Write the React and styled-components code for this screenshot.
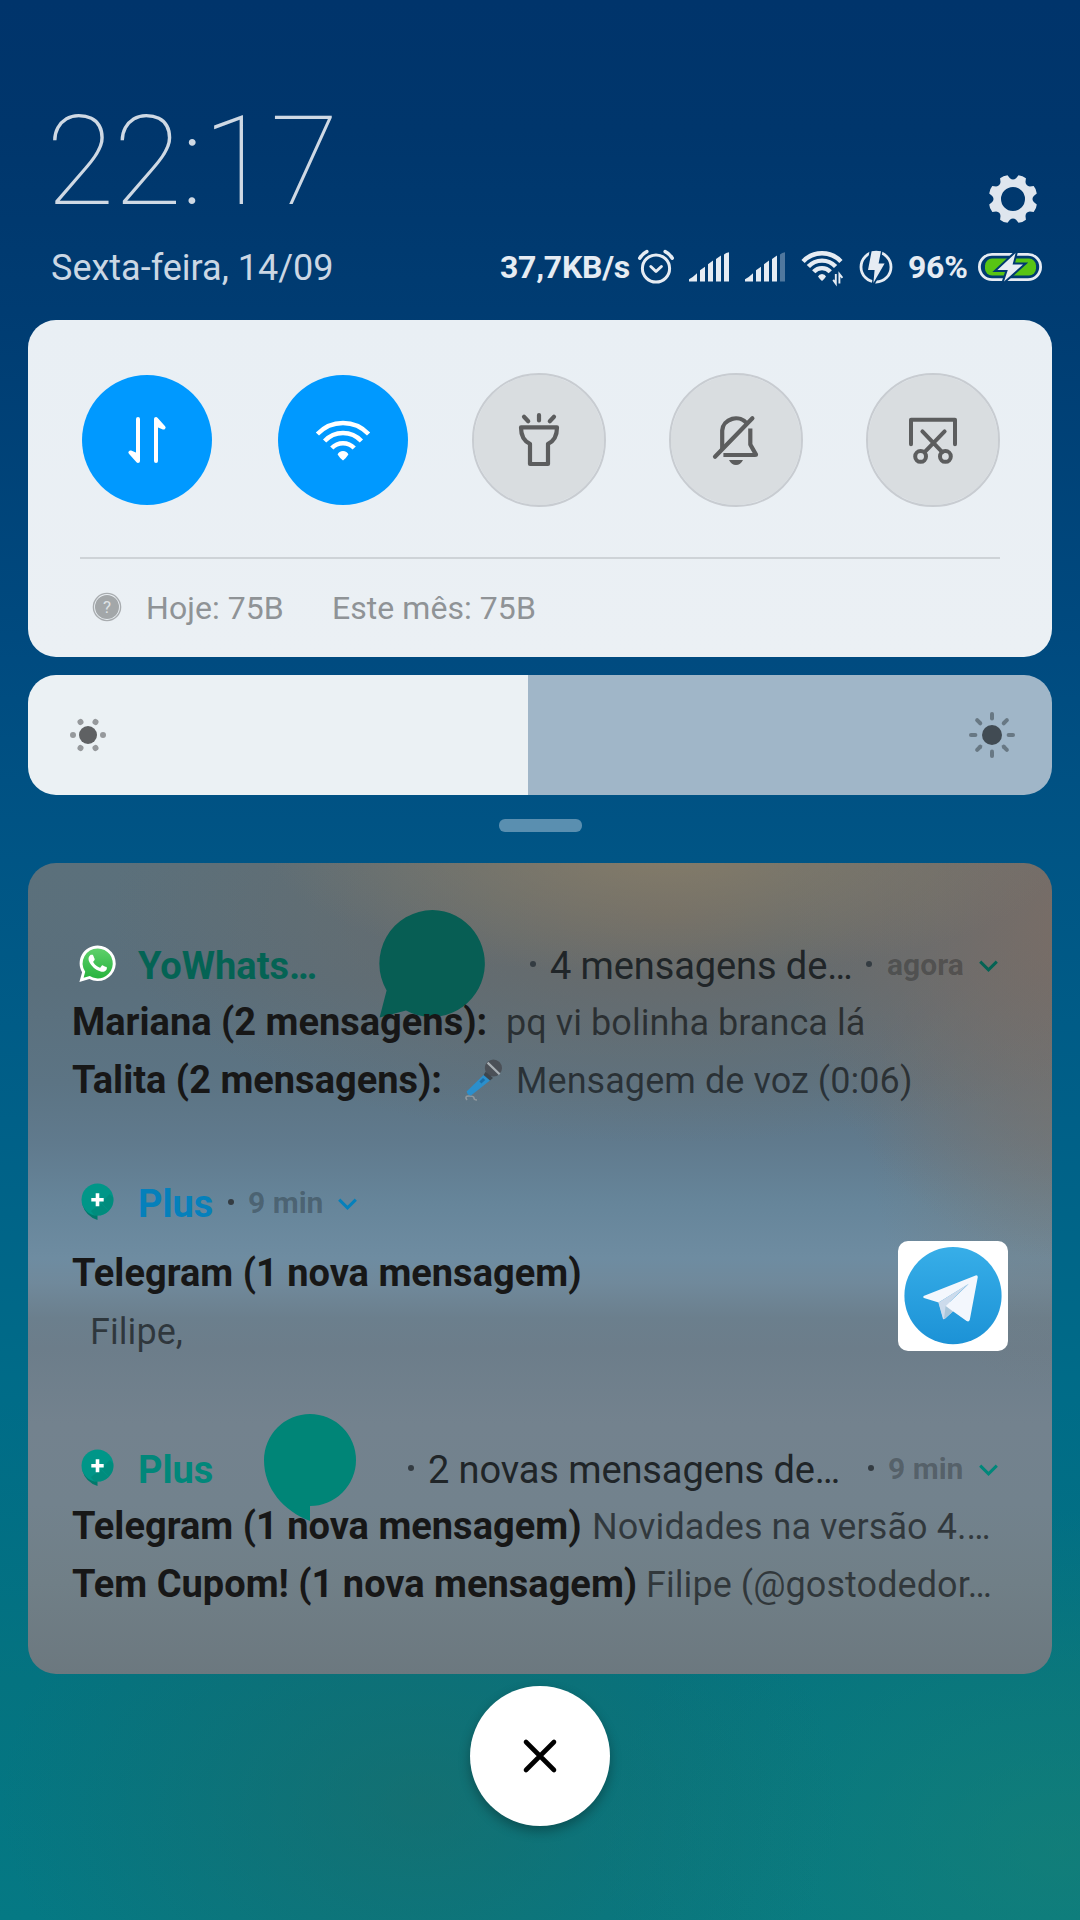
import React from "react";
import styled, { createGlobalStyle } from "styled-components";

const GlobalStyle = createGlobalStyle`
  * {
    box-sizing: border-box;
  }

  body {
    margin: 0;
    font-family: Roboto, "Noto Sans", sans-serif;
  }
`;

const Screen = styled.main`
  width: 1080px;
  height: 1920px;
  padding: 89px 28px 0;
  overflow: hidden;
  background:
    radial-gradient(ellipse 420px 300px at 420px 1800px, rgba(34, 106, 98, 0.5), transparent),
    radial-gradient(ellipse 460px 340px at 1060px 1850px, rgba(30, 132, 112, 0.5), transparent),
    linear-gradient(
      #00346b 0,
      #00366c 130px,
      #003c72 310px,
      #004b80 660px,
      #005585 860px,
      #006088 1120px,
      #006c88 1400px,
      #047380 1680px,
      #057984 1920px
    );
`;

// Header
const TopRow = styled.div`
  display: flex;
  justify-content: space-between;
  align-items: flex-end;
  height: 146px;
  padding: 0 15px 0 18px;
`;

const Clock = styled.time`
  font-size: 125px;
  font-weight: 100;
  line-height: 146px;
  letter-spacing: -0.8px;
  color: #cfd9e4;
`;

const SettingsButton = styled.button`
  width: 48px;
  height: 48px;
  margin-bottom: 12px;
  padding: 0;
  border: none;
  background: none;
  color: #dfe6ee;
`;

const InfoRow = styled.div`
  display: flex;
  justify-content: space-between;
  align-items: center;
  height: 42px;
  margin: 11px 0 32px;
  padding: 0 10px 0 23px;
`;

const DateText = styled.span`
  font-size: 36px;
  line-height: 42px;
  padding-top: 1px;
  color: #cbd7e4;
`;

const StatusBar = styled.div`
  display: flex;
  align-items: center;
  color: #e6ecf3;
`;

const StatusText = styled.span`
  width: ${({ $width }) => $width}px;
  margin: -1px ${({ $gap }) => $gap}px 0 0;
  font-size: 32px;
  font-weight: 700;
  line-height: 42px;
  letter-spacing: -0.25px;
  white-space: nowrap;
`;

const StatusIcon = styled.svg`
  flex: none;
  margin: -1px ${({ $gap }) => $gap || 0}px 0 0;
  overflow: visible;
`;

// Quick settings
const QuickPanel = styled.section`
  height: 337px;
  padding: 53px 52px 0;
  border-radius: 28px;
  background: linear-gradient(#e9eff4, #ebf0f4);
`;

const Toggles = styled.div`
  display: grid;
  grid-template-columns: 196px 196px 197px 197px 134px;
  height: 184px;
`;

const Toggle = styled.button`
  width: 134px;
  height: 134px;
  padding: 0;
  border: 2px solid ${({ $on }) => ($on ? "transparent" : "#c8ccd1")};
  border-radius: 50%;
  background: ${({ $on }) => ($on ? "#0099ff" : "#d9dde0")};
  background-clip: padding-box;
  color: ${({ $on }) => ($on ? "#fff" : "#5c5d5e")};

  svg {
    display: block;
    overflow: visible;
    margin: auto;
  }
`;

const Usage = styled.div`
  display: flex;
  align-items: center;
  height: 98px;
  padding: 0 0 0 12px;
  border-top: 2px solid #ced3d7;
  font-size: 32px;
  letter-spacing: 0.05px;
  color: #8f9396;

  svg {
    margin-right: 24px;
  }
`;

const UsageItem = styled.span`
  width: ${({ $width }) => $width}px;
  padding-top: 1px;
  white-space: nowrap;
`;

// Brightness
const Brightness = styled.div`
  display: flex;
  justify-content: space-between;
  align-items: center;
  height: 120px;
  margin-top: 18px;
  padding: 0 36px 0 40px;
  border-radius: 28px;
  background: linear-gradient(90deg, #ebf1f4 500px, #a0b6c8 500px);
`;

const Handle = styled.div`
  width: 83px;
  height: 13px;
  margin: 24px auto 31px;
  border-radius: 6px;
  background: #5a8fb0;
`;

// Notifications
const Shade = styled.section`
  height: 811px;
  padding: 81px 54px 0 44px;
  border-radius: 28px;
  background:
    radial-gradient(ellipse 400px 130px at 640px -15px, rgba(140, 128, 104, 0.8), transparent),
    radial-gradient(ellipse 300px 340px at 1060px 60px, rgba(126, 108, 98, 0.85), transparent),
    radial-gradient(ellipse 560px 230px at 640px 50px, rgba(110, 104, 98, 0.8), transparent),
    radial-gradient(ellipse 200px 260px at 1040px 270px, rgba(122, 120, 112, 0.45), transparent),
    linear-gradient(
      #5b707b 0,
      #5a6f7c 120px,
      #5c7484 220px,
      #607a8d 280px,
      #66859a 340px,
      #6e8ca1 395px,
      #70899b 420px,
      #6b7f8d 455px,
      #6c7d8a 485px,
      #73828e 560px,
      #72828d 640px,
      #707f87 720px,
      #6c787f 811px
    );
`;

const Notification = styled.article`
  margin-bottom: ${({ $after }) => $after || 0}px;
`;

const Head = styled.header`
  display: flex;
  align-items: center;
  height: 44px;
  white-space: nowrap;
`;

const AppIcon = styled.svg`
  flex: none;
  margin: -5px 22px 0 7px;
  overflow: visible;
`;

const AppName = styled.span`
  flex: none;
  width: ${({ $width }) => $width}px;
  font-size: 38px;
  font-weight: 700;
  line-height: 44px;
  color: ${({ $color }) => $color};
`;

const Bubble = styled.svg`
  flex: none;
  margin: ${({ $shift }) => $shift}px 0 -60px;
  align-self: flex-start;
`;

const Dot = styled.i`
  flex: none;
  width: 6px;
  height: 6px;
  margin: 0 ${({ $right }) => $right}px 4px ${({ $left }) => $left}px;
  border-radius: 50%;
  background: #343c42;
`;

const Summary = styled.span`
  font-size: 38px;
  line-height: 44px;
  letter-spacing: -0.1px;
  color: #202528;
`;

const When = styled.span`
  display: flex;
  align-items: center;
  margin-left: ${({ $end }) => ($end ? "auto" : "0")};
  font-size: 30px;
  font-weight: 700;
  line-height: 42px;
  color: rgba(0, 0, 0, 0.27);
`;

const Time = styled.span`
  width: ${({ $width }) => $width}px;
  margin: -2px 16px 0 0;
`;

const Body = styled.div`
  display: flex;
  justify-content: space-between;
  align-items: flex-start;
  height: 119px;
  margin: 15px -10px 0 0;
`;

const Lines = styled.div`
  padding-top: ${({ $top }) => $top}px;
`;

const Line = styled.p`
  height: 58px;
  margin: 0;
  padding-left: ${({ $indent }) => $indent || 0}px;
  font-size: 36px;
  line-height: ${({ $indent }) => ($indent ? 60 : 58)}px;
  letter-spacing: 0.06px;
  color: rgba(0, 0, 0, 0.56);
  white-space: pre;

  b {
    display: inline-block;
    width: ${({ $lead }) => ($lead ? `${$lead}px` : "auto")};
    font-size: 38px;
    letter-spacing: 0;
    color: #171717;
  }

  svg {
    margin: 0 13px -8px 0;
    overflow: visible;
  }
`;

const Avatar = styled.div`
  width: 110px;
  height: 110px;
  border-radius: 10px;
  background: #fff;
`;

const CloseButton = styled.button`
  display: grid;
  place-items: center;
  width: 140px;
  height: 140px;
  margin: 12px auto 0;
  border: none;
  border-radius: 50%;
  background: #fff;
  box-shadow: 0 5px 12px rgba(0, 0, 0, 0.3);
`;

// Gear outline: eight teeth, a notch at twelve o'clock
const polar = (r, deg) => {
  const a = (deg * Math.PI) / 180;
  return `${(r * Math.sin(a)).toFixed(2)} ${(-r * Math.cos(a)).toFixed(2)}`;
};

const gearPath = () => {
  let d = "";
  for (let i = 0; i < 8; i++) {
    const a = i * 45 + 22.5;
    d += `${i ? "L" : "M"}${polar(21, a - 14)} L${polar(24.4, a - 9.5)} Q${polar(25.4, a)} ${polar(24.4, a + 9.5)} L${polar(21, a + 14)} Q${polar(18.2, a + 22.5)} ${polar(21, a + 31)} `;
  }
  return `${d}Z M12 0 A12 12 0 1 0 -12 0 A12 12 0 1 0 12 0 Z`;
};

const GearIcon = () => (
  <svg width="48" height="48" viewBox="-24 -24 48 48" overflow="visible">
    <path d={gearPath()} fill="currentColor" fillRule="evenodd" />
  </svg>
);

const AlarmIcon = () => (
  <StatusIcon $gap={15} width="36" height="34" viewBox="0 0 36 34" fill="none" stroke="currentColor" strokeWidth="3" strokeLinecap="round">
    <circle cx="18" cy="18.5" r="13.6" />
    <path d="M12.8 16.5l5.2 5 5.4-5" strokeLinejoin="round" />
    <path d="M1.8 8.2Q4.4 3.6 8.8 1.6M34.2 8.2Q31.6 3.6 27.2 1.6" strokeWidth="3.6" />
  </StatusIcon>
);

const SignalIcon = ({ weak }) => (
  <StatusIcon $gap={16} width="40" height="30" viewBox="0 0 40 30" fill="currentColor">
    <path d="M0 29.5v-2.3q4-2 8-6v8.3zM11 29.5V18.2l5-3.4v14.7zM19 29.5V12.2l5-3.6v20.9zM27 29.5V7l5-3.6v26.1z" />
    <path d="M35 29.5V2.5Q37 .5 40 .2v29.3z" opacity={weak ? 0.35 : 1} />
  </StatusIcon>
);

const WifiShape = ({ width }) => (
  <>
    <g fill="none" stroke="currentColor" strokeWidth={width}>
      <path d="M-25.6 -5.9A35 35 0 0 1 25.6 -5.9" />
      <path d="M-18.4 1.1A25 25 0 0 1 18.4 1.1" />
      <path d="M-11.2 8.1A15.2 15.2 0 0 1 11.2 8.1" />
    </g>
    <path d="M-5.4 14.6Q-4 11 0 11T5.4 14.6Q3.4 18 0 20.4Q-3.4 18 -5.4 14.6Z" fill="currentColor" />
  </>
);

const StatusWifi = () => (
  <StatusIcon $gap={16} width="42" height="34" viewBox="0 0 42 34">
    <g transform="translate(21 15.8) scale(0.74)">
      <WifiShape width={6} />
    </g>
    <path d="M34.8 24v9.5l-2.6-3.6M38.4 33.5V24l3 3.8" fill="none" stroke="currentColor" strokeWidth="1.9" />
  </StatusIcon>
);

const ChargeIcon = () => (
  <StatusIcon $gap={15} width="34" height="34" viewBox="0 0 34 34">
    <circle cx="17" cy="17" r="15" fill="none" stroke="currentColor" strokeWidth="2.8" />
    <path d="M12 -2H23L20.6 12.6H26.6L13.6 36L15.4 20.4H8.4z" fill="#003a70" stroke="#003a70" strokeWidth="2" />
    <path d="M12.6 1.2Q17 .2 22 1.2L19.6 13.4H25.6L14.4 33 15.6 20H9z" fill="currentColor" />
  </StatusIcon>
);

const BatteryIcon = () => (
  <StatusIcon width="64" height="28" viewBox="0 0 64 28">
    <rect x="1.4" y="1.4" width="61.2" height="25.2" rx="12.6" fill="none" stroke="currentColor" strokeWidth="2.8" />
    <rect x="7" y="5.6" width="51" height="17" rx="7" fill="#58c413" />
    <path d="M37.6 0L19.4 17h10.4L26 28.4 45 11.6H34.6z" fill="currentColor" stroke="#003a70" strokeWidth="4" paintOrder="stroke" />
  </StatusIcon>
);

const toggles = [
  {
    name: "Dados",
    on: true,
    icon: (
      <g fill="currentColor" stroke="currentColor" strokeWidth="4" strokeLinecap="round" strokeLinejoin="round">
        <path d="M-9 -21V21L-16.6 12.4L-9 15.6" />
        <path d="M9 21V-21L16.6 -12.4L9 -15.6" />
      </g>
    ),
  },
  { name: "Wi-Fi", on: true, icon: <WifiShape width={4.4} /> },
  {
    name: "Lanterna",
    icon: (
      <g fill="none" stroke="currentColor" strokeWidth="4.2" strokeLinecap="round" strokeLinejoin="round">
        <path d="M-18 -12.6H18C18 -4.5 14.6 1.2 9 3.8V24H-9V3.8C-14.6 1.2 -18 -4.5 -18 -12.6Z" />
        <path d="M0 -25V-19.6M-15 -23.2L-10.8 -18.8M15 -23.2L10.8 -18.8" />
      </g>
    ),
  },
  {
    name: "Silencioso",
    icon: (
      <g fill="none" stroke="currentColor" strokeWidth="4.2" strokeLinejoin="round">
        <path d="M-13.8 9V-9.5A13.8 13 0 0 1 11.2 -16.2" />
        <path d="M-21 16.8L16.4 -21.8" strokeLinecap="round" />
        <path d="M14.3 -11.5V4.5L20 14.6Q20 15 19 15H-12.6" />
        <path d="M-7 20H7Q4.5 25 0 25T-7 20Z" fill="currentColor" stroke="none" />
      </g>
    ),
  },
  {
    name: "Captura",
    icon: (
      <g fill="none" stroke="currentColor" strokeWidth="4" strokeLinecap="round" strokeLinejoin="round">
        <path d="M-22 4.2V-20.2H22V4.2" />
        <path d="M-10.6 -8.6L9.2 12.2M11.6 -8.6L-8.4 12.2" />
        <circle cx="-12.4" cy="16.4" r="5.4" />
        <circle cx="12.4" cy="16.4" r="5.4" />
      </g>
    ),
  },
];

const HelpIcon = () => (
  <svg width="30" height="30" viewBox="0 0 30 30">
    <circle cx="15" cy="15" r="13.6" fill="none" stroke="#a9adb0" strokeWidth="1.4" />
    <circle cx="15" cy="15" r="12" fill="#a3a7a9" />
    <text x="15" y="21" textAnchor="middle" fontSize="17" fill="#dfe3e6">?</text>
  </svg>
);

const DimIcon = () => (
  <svg width="40" height="40" viewBox="-20 -20 40 40">
    <circle r="9" fill="#5f6163" />
    {[0, 60, 120, 180, 240, 300].map((a) => (
      <circle key={a} cx="15" r="3" fill="#96999c" transform={`rotate(${a})`} />
    ))}
  </svg>
);

const BrightIcon = () => (
  <svg width="48" height="48" viewBox="-24 -24 48 48">
    <circle r="10" fill="#414b53" />
    {[0, 45, 90, 135, 180, 225, 270, 315].map((a) => (
      <path key={a} d="M16.6 0H21" stroke="#687884" strokeWidth="4" strokeLinecap="round" transform={`rotate(${a})`} />
    ))}
  </svg>
);

const WhatsAppIcon = () => (
  <AppIcon width="37" height="37" viewBox="0 0 37 37">
    <defs>
      <linearGradient id="wa" x2="0" y2="1">
        <stop stopColor="#5fd06b" />
        <stop offset="1" stopColor="#27b33e" />
      </linearGradient>
    </defs>
    <path d="M18.5 0.5A18 17.8 0 1 1 10.4 34.1L0.4 37L3.1 27.3A18 17.8 0 0 1 18.5 0.5Z" fill="#fff" />
    <path d="M18.7 3.4A15 15 0 1 1 10.8 31.1L4.6 32.8L6.2 26.7A15 15 0 0 1 18.7 3.4Z" fill="url(#wa)" />
    <path
      transform="translate(0.4 0) scale(1.52)"
      fill="#fff"
      d="M17.472 14.382c-.297-.149-1.758-.867-2.03-.967-.273-.099-.471-.148-.67.15-.197.297-.767.966-.94 1.164-.173.199-.347.223-.644.075-.297-.15-1.255-.463-2.39-1.475-.883-.788-1.48-1.761-1.653-2.059-.173-.297-.018-.458.13-.606.134-.133.298-.347.446-.52.149-.174.198-.298.298-.497.099-.198.05-.371-.025-.52-.075-.149-.669-1.612-.916-2.207-.242-.579-.487-.5-.669-.51-.173-.008-.371-.01-.57-.01-.198 0-.52.074-.792.372-.272.297-1.04 1.016-1.04 2.479 0 1.462 1.065 2.875 1.213 3.074.149.198 2.096 3.2 5.077 4.487.709.306 1.262.489 1.694.625.712.227 1.36.195 1.871.118.571-.085 1.758-.719 2.006-1.413.248-.694.248-1.289.173-1.413-.074-.124-.272-.198-.57-.347z"
    />
  </AppIcon>
);

const PlusIcon = () => (
  <AppIcon width="37" height="37" viewBox="0 0 37 37">
    <path d="M3.2 21Q6.4 33 18.5 37V30z" fill="#00796b" />
    <circle cx="18.5" cy="16.6" r="16" fill="#009688" />
    <path d="M22.6 20L29.8 27.8A16 16 0 0 0 34.3 14.6L30.6 11z" fill="#008577" opacity="0.6" />
    <path d="M22 20.5l7.5 7.6A16 16 0 0 1 14.8 32.1L12 28z" fill="#008577" opacity="0.6" />
    <path d="M18.5 10.2v13M12.3 16.7h12.4" stroke="#fff" strokeWidth="3.6" />
  </AppIcon>
);

const Chevron = ({ color }) => (
  <svg width="19" height="13" viewBox="0 0 19 13">
    <path d="M1.2 1.6l8.3 8.2 8.3-8.2" fill="none" stroke={color} strokeWidth="3" />
  </svg>
);

const MicIcon = () => (
  <svg width="38" height="42" viewBox="0 0 38 42">
    <path d="M2 41Q-1 37 4 37T9 39T12 41" fill="none" stroke="#8f999f" strokeWidth="1.6" />
    <path d="M20.6 14L1.6 32.5Q2.4 36.4 6 36.4L26.2 20.4z" fill="#2b8fcc" />
    <path d="M14.4 22.4l3.6-3.4 2.2 2-3.8 3.4z" fill="#1c6da6" />
    <circle cx="28.4" cy="9" r="8.6" fill="#4b5057" />
    <path d="M20.6 12.8L18.6 16 25 21.4 28 19z" fill="#3e454c" />
    <path d="M22.6 3.6L34.6 15.2" stroke="#a9b0b5" strokeWidth="2.2" />
  </svg>
);

const TelegramLogo = () => (
  <svg width="110" height="110" viewBox="0 0 110 110">
    <defs>
      <linearGradient id="tg" x2="0" y2="1">
        <stop stopColor="#37aee8" />
        <stop offset="1" stopColor="#1c92d6" />
      </linearGradient>
    </defs>
    <circle cx="55" cy="54.7" r="48.6" fill="url(#tg)" />
    <path d="M40.4 61.4L45 78Q45.8 78.6 47 77.8L56 69.4L52 60z" fill="#ccdbec" />
    <path d="M25.6 55Q24.6 56.4 26 57L40.6 61.6L70.6 43L47.6 65L68.6 80Q71 81.2 71.8 78.8L79.8 36Q79.8 34 77.6 34.4z" fill="#f3f7fd" />
    <path d="M40.6 61.6L70.8 42.6L47.6 65L45.4 78z" fill="#ccdbec" />
    <path d="M47.6 65L46 78L54.8 70.4z" fill="#a9c6da" />
  </svg>
);

const TEAL = "#046354";
const GREEN = "#01877a";
const BLUE = "#0580bb";

const App = () => {
  return (
    <>
      <GlobalStyle />
      <Screen>
        <TopRow>
          <Clock>22:17</Clock>
          <SettingsButton aria-label="Configurações">
            <GearIcon />
          </SettingsButton>
        </TopRow>
        <InfoRow>
          <DateText>Sexta-feira, 14/09</DateText>
          <StatusBar>
            <StatusText $width={130} $gap={8}>37,7KB/s</StatusText>
            <AlarmIcon />
            <SignalIcon />
            <SignalIcon weak />
            <StatusWifi />
            <ChargeIcon />
            <StatusText $width={59} $gap={11}>96%</StatusText>
            <BatteryIcon />
          </StatusBar>
        </InfoRow>

        <QuickPanel>
          <Toggles>
            {toggles.map(({ name, on, icon }) => (
              <Toggle key={name} $on={on} aria-label={name}>
                <svg width="60" height="60" viewBox="-30 -30 60 60">
                  {icon}
                </svg>
              </Toggle>
            ))}
          </Toggles>
          <Usage>
            <HelpIcon />
            <UsageItem $width={186}>Hoje: 75B</UsageItem>
            <UsageItem $width={210}>Este mês: 75B</UsageItem>
          </Usage>
        </QuickPanel>

        <Brightness>
          <DimIcon />
          <BrightIcon />
        </Brightness>
        <Handle />

        <Shade>
          <Notification $after={73}>
            <Head>
              <WhatsAppIcon />
              <AppName $color={TEAL} $width={241}>YoWhats…</AppName>
              <Bubble $shift={-34} width="107" height="108" viewBox="0 0 107 108">
                <path d="M53.5 0A53.5 53.5 0 1 1 27 100.6L0.6 107.6L7.6 80.4A53.5 53.5 0 0 1 53.5 0Z" fill="#075e54" />
              </Bubble>
              <Dot $left={44} $right={14} />
              <Summary>4 mensagens de…</Summary>
              <When $end>
                <Dot $left={0} $right={15} />
                <Time $width={76}>agora</Time>
                <Chevron color={TEAL} />
              </When>
            </Head>
            <Lines $top={5}>
              <Line $lead={434}><b>Mariana (2 mensagens):</b>pq vi bolinha branca lá</Line>
              <Line $lead={393}><b>Talita (2 mensagens):</b><MicIcon />Mensagem de voz (0:06)</Line>
            </Lines>
          </Notification>

          <Notification $after={88}>
            <Head>
              <PlusIcon />
              <AppName $color={BLUE} $width={90}>Plus</AppName>
              <Dot $left={0} $right={14} />
              <When>
                <Time $width={74}>9 min</Time>
                <Chevron color={BLUE} />
              </When>
            </Head>
            <Body>
              <Lines $top={3}>
                <Line><b>Telegram (1 nova mensagem)</b></Line>
                <Line $indent={18}>Filipe,</Line>
              </Lines>
              <Avatar>
                <TelegramLogo />
              </Avatar>
            </Body>
          </Notification>

          <Notification>
            <Head>
              <PlusIcon />
              <AppName $color={GREEN} $width={126}>Plus</AppName>
              <Bubble $shift={-34} width="92" height="107" viewBox="0 0 92 107">
                <path d="M46 0A46 46 0 0 1 46 92V107C20 97 0 75 0 46A46 46 0 0 1 46 0Z" fill="#008577" />
              </Bubble>
              <Dot $left={52} $right={14} />
              <Summary>2 novas mensagens de…</Summary>
              <When $end>
                <Dot $left={0} $right={14} />
                <Time $width={75}>9 min</Time>
                <Chevron color={GREEN} />
              </When>
            </Head>
            <Lines $top={5}>
              <Line $lead={520}><b>Telegram (1 nova mensagem)</b>Novidades na versão 4.…</Line>
              <Line $lead={574}><b>Tem Cupom! (1 nova mensagem)</b>Filipe (@gostodedor…</Line>
            </Lines>
          </Notification>
        </Shade>

        <CloseButton aria-label="Limpar">
          <svg width="36" height="36" viewBox="-18 -18 36 36">
            <path d="M-14 -14L14 14M14 -14L-14 14" stroke="#000" strokeWidth="4.6" strokeLinecap="round" />
          </svg>
        </CloseButton>
      </Screen>
    </>
  );
};

export default App;
